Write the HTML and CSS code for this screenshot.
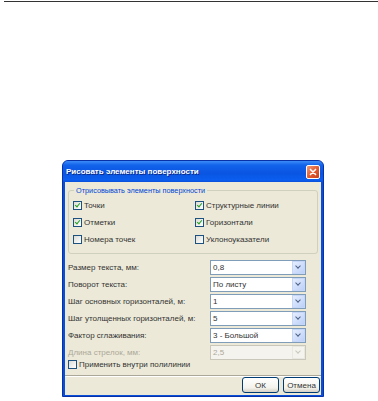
FILE: index.html
```html
<!DOCTYPE html>
<html>
<head>
<meta charset="utf-8">
<link rel="stylesheet" href="styles.css">
</head>
<body>
<div class="topline"></div>
<div class="dialog">
  <div class="titlebar">
    <span class="title">Рисовать элементы поверхности</span>
    <span class="close"><svg width="14" height="14" viewBox="0 0 14 14"><path d="M4 4 L10 10 M10 4 L4 10" stroke="#fff" stroke-width="1.8" stroke-linecap="round"/></svg></span>
  </div>
  <div class="body">
    <fieldset class="group">
      <legend>Отрисовывать элементы поверхности</legend>
      <div class="checks">
        <label class="chk"><span class="box on"></span>Точки</label>
        <label class="chk"><span class="box on"></span>Структурные линии</label>
        <label class="chk"><span class="box on"></span>Отметки</label>
        <label class="chk"><span class="box on"></span>Горизонтали</label>
        <label class="chk"><span class="box"></span>Номера точек</label>
        <label class="chk"><span class="box"></span>Уклоноуказатели</label>
      </div>
    </fieldset>
    <div class="form">
      <span class="lbl">Размер текста, мм:</span><span class="combo">0,8<i class="arrow"></i></span>
      <span class="lbl">Поворот текста:</span><span class="combo">По листу<i class="arrow"></i></span>
      <span class="lbl">Шаг основных горизонталей, м:</span><span class="combo">1<i class="arrow"></i></span>
      <span class="lbl">Шаг утолщенных горизонталей, м:</span><span class="combo">5<i class="arrow"></i></span>
      <span class="lbl">Фактор сглаживания:</span><span class="combo">3 - Большой<i class="arrow"></i></span>
      <span class="lbl dis">Длина стрелок, мм:</span><span class="combo disabled">2,5<i class="arrow"></i></span>
    </div>
    <label class="chk single"><span class="box"></span>Применить внутри полилинии</label>
    <div class="sep"></div>
    <div class="buttons">
      <span class="btn">ОК</span>
      <span class="btn">Отмена</span>
    </div>
  </div>
</div>
</body>
</html>
```
FILE: styles.css
```css
html, body { margin: 0; padding: 0; background: #fff; }
body { font-family: "Liberation Sans", Arial, sans-serif; font-size: 8px; color: #333; }
.topline { margin: 1px 0 0 4px; height: 0; border-top: 1px solid #333; }
.dialog {
  margin: 158px 0 0 62px;
  width: 262px;
  height: 237px;
  box-sizing: border-box;
  background: #0a4fd8;
  border: 1px solid #0831a8;
  border-radius: 6px 6px 0 0;
  padding: 0 2px 2px 2px;
  display: flex;
  flex-direction: column;
}
.titlebar {
  height: 21px;
  flex: none;
  display: flex;
  align-items: center;
  justify-content: space-between;
  background: linear-gradient(#3c8cf8 0%, #1262ea 20%, #0a55e2 60%, #0b5ef0 90%, #0a4fd8 100%);
  border-radius: 5px 5px 0 0;
  margin: 0 -2px;
  padding: 0 3px 0 3px;
}
.title { color: #fff; font-weight: bold; font-size: 8px; text-shadow: 1px 1px 0 #0a2a8a; }
.close {
  width: 14px; height: 14px;
  box-sizing: border-box;
  border: 1px solid #fff;
  border-radius: 2px;
  background: linear-gradient(135deg, #f09a7a, #e0582e 55%, #c8401c);
  display: flex;
}
.close svg { width: 12px; height: 12px; }
.body { flex: 1; background: #ece9d8; padding: 4px 3px 0 3px; display: flex; flex-direction: column; }
.group {
  margin: 0;
  padding: 2px 4px 5px 4px;
  border: 1px solid #d0d0bf;
  border-radius: 3px;
}
.group legend { color: #0046d5; padding: 0 2px; margin-left: 1px; font-size: 7.3px; }
.checks { display: grid; grid-template-columns: 122px 1fr; grid-auto-rows: 17px; }
.chk { display: flex; align-items: center; gap: 2px; }
.box {
  width: 9px; height: 9px;
  box-sizing: border-box;
  border: 1px solid #1c5180;
  background: linear-gradient(135deg, #dcdcd6, #fff);
  position: relative;
}
.box.on::after {
  content: "";
  position: absolute;
  left: 2px; top: 0px;
  width: 2px; height: 4px;
  border: solid #21a121;
  border-width: 0 1.5px 1.5px 0;
  transform: rotate(40deg);
}
.form {
  margin-top: 5px;
  display: grid;
  grid-template-columns: 142px 96px;
  grid-auto-rows: 17px;
  align-items: center;
}
.lbl.dis { color: #aca899; }
.combo {
  height: 15px;
  box-sizing: border-box;
  border: 1px solid #7f9db9;
  background: #fff;
  display: flex;
  align-items: center;
  justify-content: space-between;
  padding-left: 2px;
}
.arrow {
  width: 13px; height: 13px;
  box-sizing: border-box;
  background: linear-gradient(135deg, #e6eefe, #bcd0f8);
  border: 1px solid #c6d6f8;
  position: relative;
}
.arrow::after {
  content: "";
  position: absolute;
  left: 3px; top: 2px;
  width: 3px; height: 3px;
  border: solid #4d6185;
  border-width: 0 1.5px 1.5px 0;
  transform: rotate(45deg);
}
.combo.disabled { background: #f4f3ee; color: #aca899; border-color: #c9c7ba; }
.combo.disabled .arrow { background: #f4f3ee; border-color: #e8e7e0; }
.combo.disabled .arrow::after { border-color: #c9c7ba; }
.single { height: 14px; margin-top: -4px; }
.sep { height: 0; border-top: 1px solid #aca899; border-bottom: 1px solid #fff; margin: 4px -3px 0 -3px; }
.buttons {
  margin-top: auto;
  margin-bottom: 2px;
  margin-right: -2px;
  display: flex;
  justify-content: flex-end;
  gap: 4px;
}
.btn {
  width: 37px; height: 16px;
  box-sizing: border-box;
  border: 1px solid #003c74;
  border-radius: 3px;
  background: linear-gradient(#fff, #f3f2ec 70%, #d6d0c5);
  display: flex; align-items: center; justify-content: center;
}
```
